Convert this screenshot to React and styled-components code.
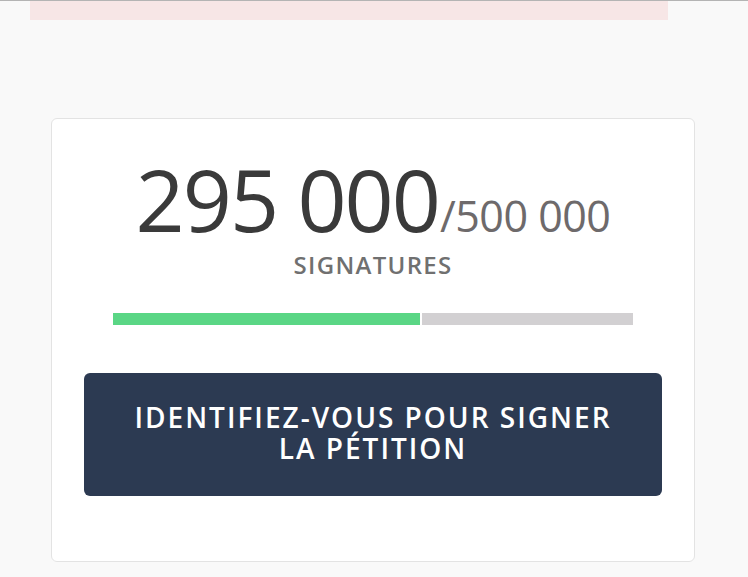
import React from "react";
import styled, { createGlobalStyle } from "styled-components";

const Global = createGlobalStyle`
  html, body {
    margin: 0;
    padding: 0;
    background: #f9f9f9;
  }
  body {
    font-family: "Open Sans", "Noto Sans", sans-serif;
    border-top: 1px solid #b4b4b4;
  }
`;

const Page = styled.div`
  display: flex;
  flex-direction: column;
  align-items: flex-start;
`;

const Alert = styled.div`
  margin-left: 30px;
  width: 638px;
  height: 19px;
  background: #f7e6e6;
`;

const Card = styled.section`
  box-sizing: border-box;
  margin: 98px 0 0 51px;
  width: 644px;
  height: 444px;
  background: #ffffff;
  border: 1px solid #e3e3e3;
  border-radius: 6px;
  display: flex;
  flex-direction: column;
  align-items: center;
  padding-top: 37px;
`;

const Count = styled.div`
  display: flex;
  align-items: baseline;
  line-height: 86px;
  height: 86px;
`;

const Current = styled.span`
  font-size: 86px;
  font-weight: 400;
  color: #3a3a3a;
  letter-spacing: -2px;
`;

const Goal = styled.span`
  font-size: 43px;
  font-weight: 400;
  color: #6e6a6b;
  margin-left: 1px;
  letter-spacing: -0.5px;
`;

const Label = styled.div`
  margin-top: 11px;
  font-size: 24px;
  line-height: 24px;
  font-weight: 600;
  color: #707070;
  letter-spacing: 1.3px;
`;

const Bar = styled.div`
  margin-top: 36px;
  width: 520px;
  height: 12px;
  display: flex;
  gap: 2px;
`;

const Segment = styled.div`
  height: 100%;
  background: ${(p) => p.$color};
`;

const Button = styled.button`
  margin-top: 48px;
  width: 578px;
  height: 123px;
  border: none;
  border-radius: 6px;
  background: #2c3a52;
  color: #ffffff;
  font-family: "Open Sans", "Noto Sans", sans-serif;
  font-size: 28px;
  line-height: 31px;
  font-weight: 600;
  letter-spacing: 2px;
  text-transform: uppercase;
  padding: 0 30px 4px;
  cursor: pointer;
`;

export default function App() {
  const signed = 295000;
  const goal = 500000;
  const pct = (signed / goal) * 100;
  return (
    <Page>
      <Global />
      <Alert />
      <Card>
        <Count>
          <Current>295 000</Current>
          <Goal>/500 000</Goal>
        </Count>
        <Label>SIGNATURES</Label>
        <Bar>
          <Segment $color="#5ad685" style={{ width: `${pct}%` }} />
          <Segment $color="#d2d0d2" style={{ flex: 1 }} />
        </Bar>
        <Button>
          Identifiez-vous pour signer
          <br />
          la pétition
        </Button>
      </Card>
    </Page>
  );
}
